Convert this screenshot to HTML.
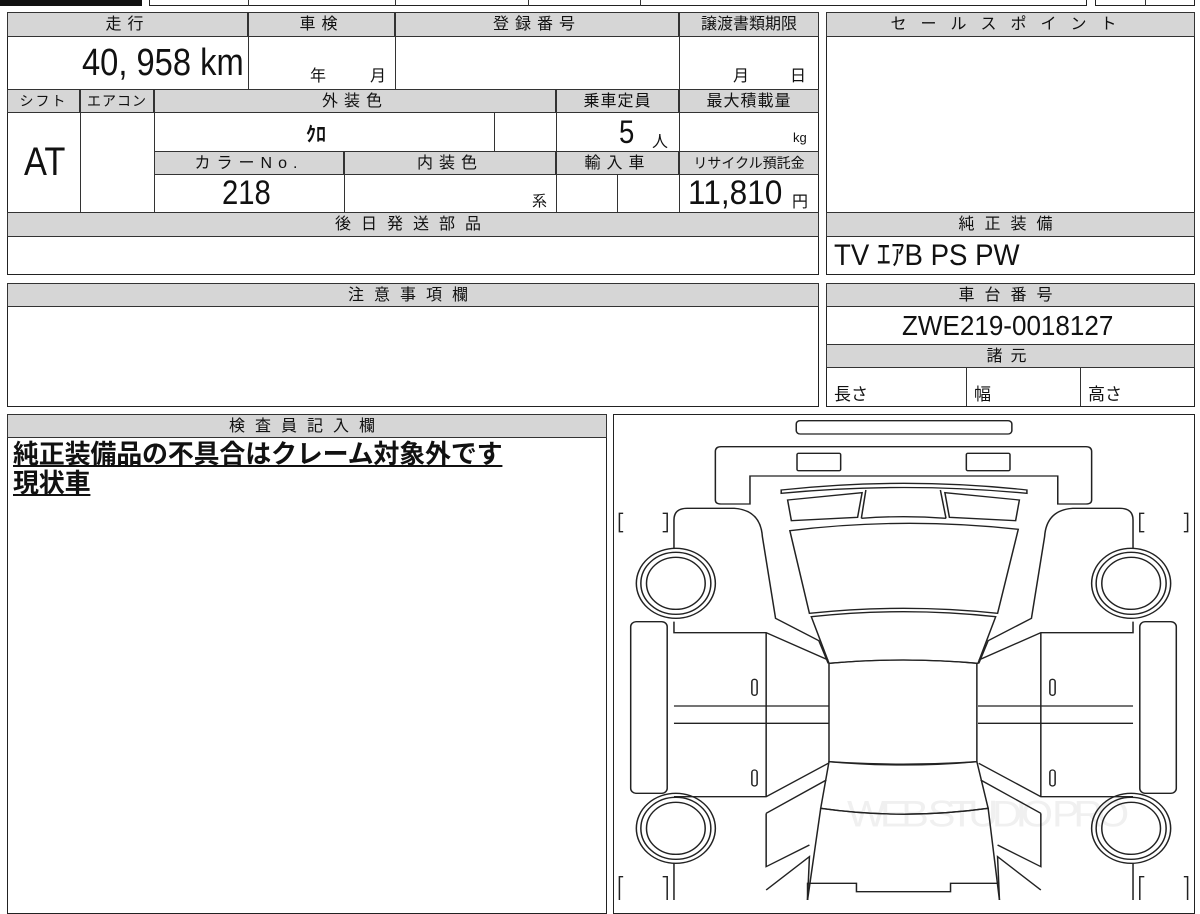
<!DOCTYPE html>
<html><head><meta charset="utf-8"><style>
*{margin:0;padding:0;box-sizing:border-box}
body{width:1200px;height:900px;background:#fff;position:relative;overflow:hidden;font-family:"Liberation Sans","Noto Sans CJK JP",sans-serif;color:#111}
.b{position:absolute;border:1.5px solid #222}
.h{position:absolute;background:#d6d6d6;border:1px solid #333;text-align:center;font-size:16px;line-height:23px;letter-spacing:6px}
.t{position:absolute;white-space:nowrap}
.n{font-family:"Liberation Sans",sans-serif;display:inline-block;transform:scaleX(.86);transform-origin:left center}
.vl{position:absolute;width:1px;background:#333}
</style></head><body>
<div style="position:absolute;left:0;top:0;width:142px;height:6px;background:#111"></div>
<div class="b" style="left:149px;top:-4px;width:938px;height:10px"></div>
<div class="vl" style="left:248px;top:0;height:6px"></div>
<div class="vl" style="left:395px;top:0;height:6px"></div>
<div class="vl" style="left:528px;top:0;height:6px"></div>
<div class="vl" style="left:640px;top:0;height:6px"></div>
<div class="b" style="left:1095px;top:-4px;width:100px;height:10px"></div>
<div class="vl" style="left:1145px;top:0;height:6px"></div>

<div class="b" style="left:7px;top:12px;width:812px;height:263px"></div>
<div class="h" style="left:7px;top:12px;width:241px;height:25px">走行</div>
<div class="h" style="left:248px;top:12px;width:147px;height:25px">車検</div>
<div class="h" style="left:395px;top:12px;width:284px;height:25px">登録番号</div>
<div class="h" style="left:679px;top:12px;width:140px;height:25px;letter-spacing:0">譲渡書類期限</div>
<div class="vl" style="left:248px;top:37px;height:52px"></div>
<div class="vl" style="left:395px;top:37px;height:52px"></div>
<div class="vl" style="left:679px;top:37px;height:52px"></div>
<div class="t" style="left:82px;top:40px;font-size:38px;line-height:46px"><span class="n">40, 958 km</span></div>
<div class="t" style="left:310px;top:62px;font-size:16px">年</div>
<div class="t" style="left:370px;top:62px;font-size:16px">月</div>
<div class="t" style="left:733px;top:62px;font-size:16px">月</div>
<div class="t" style="left:790px;top:62px;font-size:16px">日</div>

<div class="h" style="left:7px;top:89px;width:73px;height:24px;font-size:14px;letter-spacing:2px">シフト</div>
<div class="h" style="left:80px;top:89px;width:74px;height:24px;font-size:14px;letter-spacing:1px">エアコン</div>
<div class="h" style="left:154px;top:89px;width:402px;height:24px">外装色</div>
<div class="h" style="left:556px;top:89px;width:123px;height:24px;letter-spacing:1px">乗車定員</div>
<div class="h" style="left:679px;top:89px;width:140px;height:24px;letter-spacing:1px">最大積載量</div>
<div class="vl" style="left:80px;top:113px;height:99px"></div>
<div class="vl" style="left:154px;top:113px;height:99px"></div>
<div class="vl" style="left:494px;top:113px;height:38px"></div>
<div class="vl" style="left:556px;top:113px;height:99px"></div>
<div class="vl" style="left:679px;top:113px;height:99px"></div>
<div class="t" style="left:306px;top:118px;font-size:20px;font-weight:bold">ｸﾛ</div>
<div class="t" style="left:619px;top:114px;font-size:32px"><span class="n">5</span></div>
<div class="t" style="left:652px;top:128px;font-size:16px">人</div>
<div class="t" style="left:793px;top:130px;font-size:13px">kg</div>
<div class="t" style="left:24px;top:140px;font-size:40px"><span class="n">AT</span></div>
<div class="h" style="left:154px;top:151px;width:190px;height:24px">カラーNo.</div>
<div class="h" style="left:344px;top:151px;width:212px;height:24px">内装色</div>
<div class="h" style="left:556px;top:151px;width:123px;height:24px">輸入車</div>
<div class="h" style="left:679px;top:151px;width:140px;height:24px;font-size:14px;letter-spacing:0">リサイクル預託金</div>
<div class="vl" style="left:344px;top:175px;height:37px"></div>
<div class="vl" style="left:617px;top:175px;height:37px"></div>
<div class="t" style="left:222px;top:174px;font-size:34px"><span class="n">218</span></div>
<div class="t" style="left:532px;top:190px;font-size:15px">系</div>
<div class="t" style="left:688px;top:174px;font-size:34px"><span class="n" style="transform:scaleX(.93)">11,810</span></div>
<div class="t" style="left:792px;top:188px;font-size:16px">円</div>
<div class="h" style="left:7px;top:212px;width:812px;height:25px;letter-spacing:10px">後日発送部品</div>

<div class="b" style="left:826px;top:12px;width:369px;height:263px"></div>
<div class="h" style="left:826px;top:12px;width:369px;height:25px;letter-spacing:14px">セールスポイント</div>
<div class="h" style="left:826px;top:212px;width:369px;height:25px;letter-spacing:10px">純正装備</div>
<div class="t" style="left:834px;top:237px;font-size:30px;line-height:38px"><span class="n" style="transform:scaleX(.92)">TV ｴｱB PS PW</span></div>

<div class="b" style="left:7px;top:283px;width:812px;height:124px"></div>
<div class="h" style="left:7px;top:283px;width:812px;height:24px;letter-spacing:10px">注意事項欄</div>
<div class="b" style="left:826px;top:283px;width:369px;height:124px"></div>
<div class="h" style="left:826px;top:283px;width:369px;height:24px;letter-spacing:10px">車台番号</div>
<div class="t" style="left:902px;top:307px;font-size:28px;line-height:38px"><span class="n" style="transform:scaleX(.93)">ZWE219-0018127</span></div>
<div class="h" style="left:826px;top:344px;width:369px;height:24px;letter-spacing:8px">諸元</div>
<div class="vl" style="left:966px;top:368px;height:38px"></div>
<div class="vl" style="left:1080px;top:368px;height:38px"></div>
<div class="t" style="left:834px;top:380px;font-size:17px">長さ</div>
<div class="t" style="left:974px;top:380px;font-size:17px">幅</div>
<div class="t" style="left:1088px;top:380px;font-size:17px">高さ</div>

<div class="b" style="left:7px;top:414px;width:600px;height:500px"></div>
<div class="h" style="left:7px;top:414px;width:600px;height:24px;letter-spacing:10px">検査員記入欄</div>
<div class="t" style="left:13px;top:440px;font-size:26px;line-height:29px;text-decoration:underline;font-weight:bold;letter-spacing:-0.2px">純正装備品の不具合はクレーム対象外です<br>現状車</div>

<div class="b" style="left:613px;top:414px;width:582px;height:500px"></div>
<svg style="position:absolute;left:610px;top:410px" width="590" height="490" viewBox="0 0 1568 1470" preserveAspectRatio="none" fill="none" stroke="#222" stroke-width="4">
<text x="630" y="1250" font-size="110" textLength="750" fill="#f0f0f0" stroke="none" font-family="Liberation Sans">WEB STUDIO PRO</text>
<rect x="495" y="32" width="573" height="40" rx="10"/>
<path d="M280,270 L280,125 Q280,110 295,110 L1265,110 Q1280,110 1280,125 L1280,270 Q1280,282 1265,282 L1190,282 L1190,198 L372,198 L372,282 L295,282 Q280,282 280,270 Z"/>
<rect x="497" y="130" width="116" height="52" rx="4"/>
<rect x="947" y="130" width="116" height="52" rx="4"/>
<path d="M455,240 Q780,200 1108,240 L1108,250 Q780,215 455,250 Z"/>
<path d="M478,362 Q780,320 1085,358 L1030,610 Q780,580 530,610 Z"/>
<path d="M535,620 Q780,590 1025,620 L978,760 Q780,740 582,760 Z"/>
<path d="M582,760 Q780,740 975,760 L975,1055 Q780,1070 582,1055 Z"/>
<path d="M582,1055 Q780,1075 975,1055 L1005,1195 Q780,1230 560,1195 Z"/>
<path d="M560,1195 Q780,1230 1005,1195 L1035,1470 M525,1470 L560,1195"/>
<path d="M668,325 L680,240 M893,325 L878,240 M668,325 Q780,315 893,325"/>
<path d="M525,1470 L525,1420 L655,1420 L655,1445 L905,1445 L905,1420 L1035,1420"/>
<g id="half">
<path d="M472,270 L670,248 L658,322 L482,332 Z"/>
<path d="M170,415 L170,330 Q170,295 205,295 L330,295 Q400,300 405,380 L440,625 L555,692 L580,760"/>
<path d="M170,635 L170,668 L415,668 L580,750 M170,888 L582,888 M170,940 L582,940 M170,1160 L415,1160 L580,1060 M415,668 L415,1160"/>
<rect x="55" y="635" width="97" height="515" rx="15"/>
<circle cx="175" cy="520" r="105"/><circle cx="175" cy="520" r="93"/><circle cx="175" cy="520" r="78"/>
<circle cx="175" cy="1255" r="105"/><circle cx="175" cy="1255" r="93"/><circle cx="175" cy="1255" r="78"/>
<path d="M415,1210 L575,1110 M415,1210 L415,1370 L530,1305 M170,1360 L170,1470 M415,1440 L530,1340 L525,1470"/>
<path d="M35,310 L25,310 L25,365 L35,365 M140,310 L152,310 L152,365 L140,365"/>
<path d="M35,1400 L25,1400 L25,1470 M140,1400 L152,1400 L152,1470"/>
<rect x="377" y="808" width="14" height="48" rx="7"/>
<rect x="377" y="1080" width="14" height="48" rx="7"/>
</g>
<use href="#half" transform="translate(1560,0) scale(-1,1)"/>
</svg>
</body></html>
